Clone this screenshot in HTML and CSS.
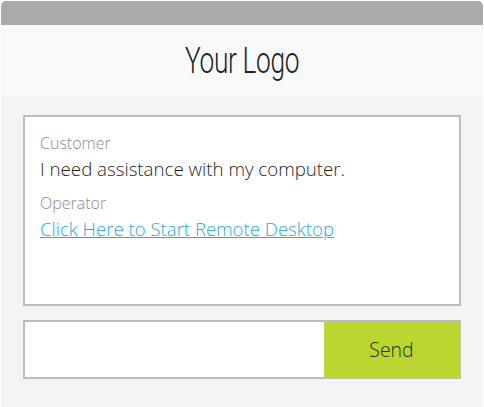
FILE: index.html
```html
<!DOCTYPE html>
<html>
<head>
<meta charset="utf-8">
<link rel="stylesheet" href="styles.css">
</head>
<body>
<div class="app">
  <div class="topbar"></div>
  <header class="header"><span class="logo">Your Logo</span></header>
  <main class="main">
    <div class="chat">
      <div class="msg">
        <div class="who">Customer</div>
        <div class="text">I need assistance with my computer.</div>
      </div>
      <div class="msg">
        <div class="who">Operator</div>
        <a class="link" href="#">Click Here to Start Remote Desktop</a>
      </div>
    </div>
    <form class="compose">
      <input class="input" type="text">
      <button class="send" type="button">Send</button>
    </form>
  </main>
</div>
</body>
</html>
```
FILE: styles.css
```css
html, body {
  margin: 0;
  padding: 0;
  background: #ffffff;
}
body {
  font-family: "Open Sans", "Liberation Sans", sans-serif;
  font-weight: 300;
}
.app {
  margin: 1px 1px 0 1px;
  height: 406px;
  display: flex;
  flex-direction: column;
}
.topbar {
  height: 24px;
  background: #a9aaac;
  border-radius: 5px 5px 0 0;
}
.header {
  height: 71px;
  background: #f8f9fb;
  display: flex;
  justify-content: center;
  align-items: center;
}
.logo {
  font-family: Roboto, sans-serif;
  font-weight: 300;
  font-size: 36px;
  color: #231f20;
  display: inline-block;
  transform: scaleX(0.73);
  letter-spacing: -0.5px;
}
.main {
  flex: 1;
  background: #f3f5f4;
  padding: 19px 22px 0 22px;
}
.chat {
  height: 191px;
  box-sizing: border-box;
  background: #fff;
  border: 2px solid #bcbdbd;
  padding: 14px 15px;
}
.msg {
  margin-bottom: 8px;
}
.who {
  font-size: 16px;
  line-height: 24px;
  color: #8b8b8b;
}
.text {
  font-size: 18.7px;
  line-height: 28px;
  color: #1f1f1f;
}
.link {
  display: inline-block;
  font-size: 18.6px;
  line-height: 28px;
  color: #2aa8df;
  text-decoration: underline;
}
.compose {
  margin: 14px 0 0 0;
  height: 59px;
  box-sizing: border-box;
  border: 2px solid #bcbdbd;
  display: flex;
}
.input {
  flex: 1;
  border: 0;
  margin: 0;
  padding: 0 10px;
  background: #fff;
  outline: none;
}
.send {
  width: 135px;
  border: 0;
  margin: 0;
  background: #bcd631;
  font-family: "Open Sans", "Liberation Sans", sans-serif;
  font-weight: 300;
  font-size: 19.5px;
  color: #2b2b2b;
}
```
